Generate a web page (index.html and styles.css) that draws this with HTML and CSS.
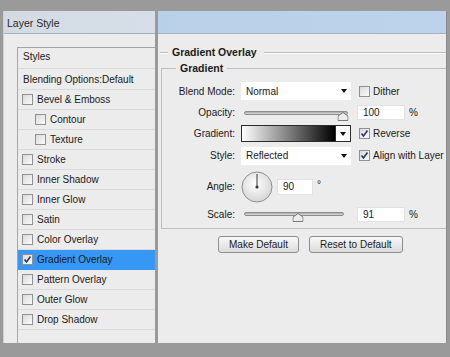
FILE: index.html
```html
<!DOCTYPE html>
<html>
    <head>
        <meta charset="utf-8">
        <title>Layer Style</title>
        <link rel="stylesheet" href="styles.css">
    </head>
    <body>
        <div class="stage">
            <div class="window styles-window">
                <div class="titlebar">Layer Style</div>
                <div class="window-body">
                    <ul class="style-list">
                        <li class="row head first">Styles</li>
                        <li class="row head">Blending Options:Default</li>
                        <li class="row"><span class="check"></span>Bevel &amp; Emboss</li>
                        <li class="row sub"><span class="check"></span>Contour</li>
                        <li class="row sub"><span class="check"></span>Texture</li>
                        <li class="row"><span class="check"></span>Stroke</li>
                        <li class="row"><span class="check"></span>Inner Shadow</li>
                        <li class="row"><span class="check"></span>Inner Glow</li>
                        <li class="row"><span class="check"></span>Satin</li>
                        <li class="row"><span class="check"></span>Color Overlay</li>
                        <li class="row selected">
                            <span class="check">
                                <svg width="9" height="9" viewBox="0 0 9 9"><path d="M1.5 4.5 L3.5 7 L7.5 1.5" fill="none" stroke="#23386b" stroke-width="1.6"/></svg>
                            </span>Gradient Overlay
                        </li>
                        <li class="row"><span class="check"></span>Pattern Overlay</li>
                        <li class="row"><span class="check"></span>Outer Glow</li>
                        <li class="row"><span class="check"></span>Drop Shadow</li>
                    </ul>
                </div>
            </div>

            <div class="window options-window">
                <div class="titlebar"></div>
                <div class="window-body">
                    <div class="group-title"><span>Gradient Overlay</span></div>
                    <fieldset class="group">
                        <legend>Gradient</legend>
                        <div class="form">
                            <label>Blend Mode:</label>
                            <div class="select">Normal<span class="arrow"></span></div>
                            <div class="option"><span class="check"></span>Dither</div>

                            <label>Opacity:</label>
                            <div class="slider">
                                <div class="track"></div>
                                <svg class="thumb" style="left: 95%" width="11" height="9" viewBox="0 0 11 9"><path d="M0.5 8.5 V4 L5.5 0.5 L10.5 4 V8.5 Z" fill="#ececec" stroke="#7a7a7a"/></svg>
                            </div>
                            <div class="value"><span class="field">100</span>%</div>

                            <label>Gradient:</label>
                            <div class="gradient-picker">
                                <div class="swatch"></div>
                                <div class="drop"><span class="arrow"></span></div>
                            </div>
                            <div class="option">
                                <span class="check">
                                    <svg width="9" height="9" viewBox="0 0 9 9"><path d="M1.5 4.5 L3.5 7 L7.5 1.5" fill="none" stroke="#23386b" stroke-width="1.6"/></svg>
                                </span>Reverse
                            </div>

                            <label>Style:</label>
                            <div class="select">Reflected<span class="arrow"></span></div>
                            <div class="option">
                                <span class="check">
                                    <svg width="9" height="9" viewBox="0 0 9 9"><path d="M1.5 4.5 L3.5 7 L7.5 1.5" fill="none" stroke="#23386b" stroke-width="1.6"/></svg>
                                </span>Align with Layer
                            </div>

                            <label>Angle:</label>
                            <div class="angle">
                                <svg class="dial" width="32" height="32" viewBox="0 0 32 32">
                                    <defs>
                                        <radialGradient id="dialFill" cx="45%" cy="40%" r="65%">
                                            <stop offset="0" stop-color="#ffffff"/>
                                            <stop offset="1" stop-color="#d2d2d2"/>
                                        </radialGradient>
                                    </defs>
                                    <circle cx="16" cy="16" r="15" fill="url(#dialFill)" stroke="#8f8f8f"/>
                                    <line x1="16" y1="16" x2="16" y2="3" stroke="#3a3a3a" stroke-width="1"/>
                                    <circle cx="16" cy="16" r="1.6" fill="#3a3a3a"/>
                                </svg>
                                <span class="field small">90</span>
                                <span class="degree">&deg;</span>
                            </div>
                            <div></div>

                            <label>Scale:</label>
                            <div class="slider short">
                                <div class="track"></div>
                                <svg class="thumb" style="left: 54%" width="11" height="9" viewBox="0 0 11 9"><path d="M0.5 8.5 V4 L5.5 0.5 L10.5 4 V8.5 Z" fill="#ececec" stroke="#7a7a7a"/></svg>
                            </div>
                            <div class="value"><span class="field">91</span>%</div>
                        </div>
                    </fieldset>
                    <div class="buttons">
                        <div class="btn">Make Default</div>
                        <div class="btn">Reset to Default</div>
                    </div>
                </div>
            </div>
        </div>
    </body>
</html>
```

FILE: styles.css
```css
html,body{
    margin: 0px;
    background-color: #9a9a9a;
}

body{
    font-family: "Liberation Sans", Arial, sans-serif;
    font-size: 10px;
    color: #1a1a1a;
}

.stage{
    display: flex;
    gap: 3px;
    height: 343px;
    padding: 11px 3px 0 3px;
    box-sizing: border-box;
}

.window{
    display: flex;
    flex-direction: column;
    background-color: #ececec;
}

.titlebar{
    height: 23px;
    flex: none;
    box-sizing: border-box;
    border-bottom: 1px solid #a3b2c2;
}

.window-body{
    flex: 1;
    display: flex;
    flex-direction: column;
    min-height: 0;
}

/* left window: styles list */

.styles-window{
    width: 152px;
    border-left: 1px solid #cfcfcf;
    box-sizing: border-box;
}

.styles-window .titlebar{
    background: linear-gradient(to right, #d3dae2, #d6dfe9);
    padding: 6px 0 0 3px;
    font-size: 10.5px;
    color: #2a2a2a;
}

.styles-window .window-body{
    padding: 13px 0 0 13px;
}

.style-list{
    flex: 1;
    margin: 0;
    padding: 0;
    list-style: none;
    border-left: 1px solid #a5a5a5;
    border-top: 1px solid #a5a5a5;
    background-color: #ececec;
}

.row{
    height: 19px;
    display: flex;
    align-items: center;
    padding-left: 4px;
    border-bottom: 1px solid #dadada;
}

.row.head{
    height: 20px;
    padding-left: 5px;
}

.row.head.first{
    box-sizing: border-box;
    height: 21px;
    padding-bottom: 3px;
}

.row.sub{
    padding-left: 17px;
}

.row.selected{
    background-color: #3797f5;
    border-bottom-color: #3797f5;
}

.check{
    width: 11px;
    height: 11px;
    box-sizing: border-box;
    border: 1px solid #919191;
    background: linear-gradient(135deg, #dadada, #fbfbfb);
    display: inline-flex;
    align-items: center;
    justify-content: center;
    flex: none;
}

.row .check{
    margin-right: 4px;
}

/* right window: gradient overlay options */

.options-window{
    flex: 1;
    border-right: 1px solid #8c8c8c;
}

.options-window .titlebar{
    background: linear-gradient(to right, #b9d0e9, #bdd3eb);
}

.options-window .window-body{
    padding-top: 12px;
}

.group-title{
    display: flex;
    align-items: center;
    gap: 4px;
    padding-left: 2px;
    font-weight: bold;
    font-size: 10.5px;
    line-height: 13px;
}

.group-title::before,
.group-title::after{
    content: "";
    height: 0;
    border-top: 1px solid #bcbcbc;
    border-bottom: 1px solid #ffffff;
}

.group-title::before{
    width: 8px;
}

.group-title::after{
    flex: 1;
    margin-left: 3px;
}

.group{
    margin: 3px 0 0 3px;
    padding: 0;
    border: 1px solid #c0c0c0;
    border-right: none;
}

.group legend{
    margin-left: 14px;
    padding: 0 4px;
    font-weight: bold;
    font-size: 10.5px;
    line-height: 13px;
}

.form{
    display: grid;
    grid-template-columns: 73px 110px auto;
    grid-template-rows: 22px 21px 21px 23px 39px 16px;
    column-gap: 6px;
    align-items: center;
    padding: 5px 0 6px 0;
}

.form label{
    text-align: right;
}

.select{
    height: 18px;
    background-color: #ffffff;
    display: flex;
    align-items: center;
    justify-content: space-between;
    padding: 0 4px 0 5px;
}

.arrow{
    width: 0;
    height: 0;
    border-left: 3.5px solid transparent;
    border-right: 3.5px solid transparent;
    border-top: 4px solid #111111;
}

.option{
    display: flex;
    align-items: center;
    gap: 3px;
    padding-left: 2px;
}

.slider{
    position: relative;
    height: 18px;
    margin: 0 3px;
}

.slider.short{
    margin-right: 7px;
}

.track{
    margin-top: 7px;
    height: 4px;
    border-radius: 2px;
    box-sizing: border-box;
    border: 1px solid #8d8d8d;
    background: linear-gradient(#a8a8a8, #dcdcdc);
}

.thumb{
    position: absolute;
    top: 8px;
    transform: translateX(-50%);
}

.value{
    display: flex;
    align-items: center;
    gap: 4px;
}

.field{
    width: 48px;
    height: 15px;
    box-sizing: border-box;
    background-color: #ffffff;
    border: 1px solid #e2e2e2;
    padding-left: 5px;
    display: flex;
    align-items: center;
}

.field.small{
    width: 36px;
    height: 16px;
}

.gradient-picker{
    display: flex;
    height: 17px;
}

.swatch{
    flex: 1;
    border: 1px solid #2b2b2b;
    background: linear-gradient(to right, #ffffff, #000000);
}

.drop{
    width: 15px;
    box-sizing: border-box;
    border: 1px solid #2b2b2b;
    border-left: none;
    background-color: #ffffff;
    display: flex;
    align-items: center;
    justify-content: center;
}

.angle{
    display: flex;
    align-items: center;
    gap: 4px;
}

.degree{
    align-self: flex-start;
    margin-top: 8px;
}

.buttons{
    display: flex;
    gap: 10px;
    margin: 7px 0 0 60px;
}

.btn{
    height: 17px;
    box-sizing: border-box;
    padding: 0 10px;
    border: 1px solid #8e8e8e;
    border-radius: 3px;
    background: linear-gradient(#f8f8f8, #dcdcdc);
    display: flex;
    align-items: center;
}
```
